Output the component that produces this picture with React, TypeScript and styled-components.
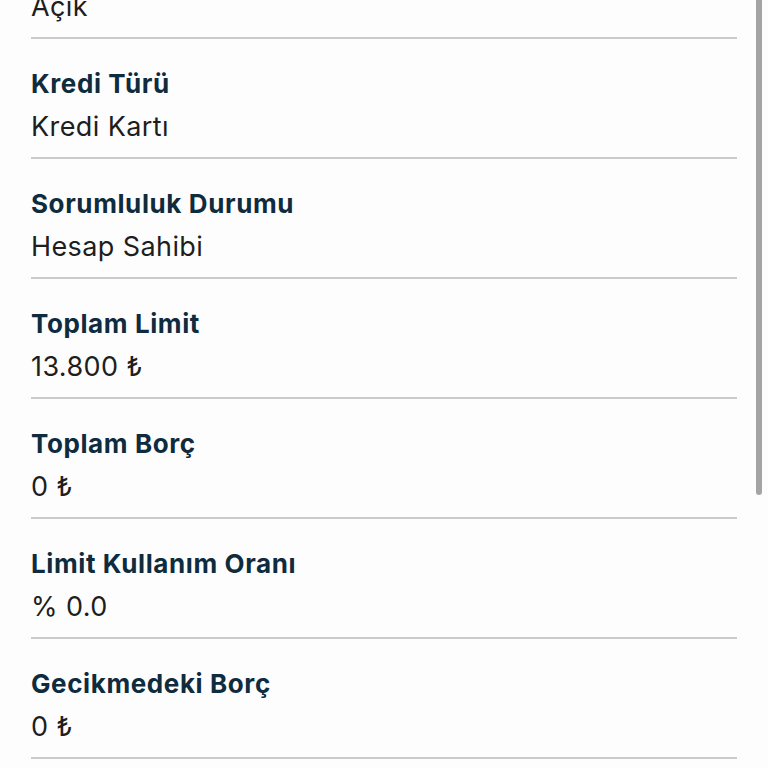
import React from 'react';
import styled, { createGlobalStyle } from 'styled-components';

interface DetailItem {
  label: string;
  value: string;
}

const details: DetailItem[] = [
  { label: 'Hesap Durumu', value: 'Açık' },
  { label: 'Kredi Türü', value: 'Kredi Kartı' },
  { label: 'Sorumluluk Durumu', value: 'Hesap Sahibi' },
  { label: 'Toplam Limit', value: '13.800 ₺' },
  { label: 'Toplam Borç', value: '0 ₺' },
  { label: 'Limit Kullanım Oranı', value: '% 0.0' },
  { label: 'Gecikmedeki Borç', value: '0 ₺' },
];

const GlobalStyle = createGlobalStyle`
  html, body {
    margin: 0;
    padding: 0;
    background: #fdfdfd;
    overflow: hidden;
  }
`;

const Screen = styled.main`
  position: relative;
  width: 768px;
  height: 768px;
  overflow: hidden;
  background: #fdfdfd;
  font-family: Inter, 'Noto Sans', sans-serif;
`;

// The list is scrolled: the first row sits mostly above the viewport
const List = styled.dl`
  margin: -81px 0 0;
  padding: 0 31px;
`;

const Row = styled.div`
  padding: 29px 0 13px;
  border-bottom: 2px solid #cbcbcb;
  display: flex;
  flex-direction: column;
  gap: 10px;
`;

const Label = styled.dt`
  margin: 0;
  font-size: 26px;
  line-height: 32px;
  font-weight: 700;
  letter-spacing: 0.6px;
  color: #0f2b3e;
`;

const Value = styled.dd`
  margin: 0;
  font-size: 27px;
  line-height: 34px;
  font-weight: 400;
  letter-spacing: 0.4px;
  color: #1e1e1e;
`;

// iOS-style overlay scrollbar thumb
const ScrollThumb = styled.div`
  position: absolute;
  top: -6px;
  right: 6px;
  width: 6px;
  height: 501px;
  border-radius: 3px;
  background: #a4a4a4;
`;

const App: React.FC = () => (
  <>
    <GlobalStyle />
    <Screen>
      <List>
        {details.map((item) => (
          <Row key={item.label}>
            <Label>{item.label}</Label>
            <Value>{item.value}</Value>
          </Row>
        ))}
      </List>
      <ScrollThumb />
    </Screen>
  </>
);

export default App;
